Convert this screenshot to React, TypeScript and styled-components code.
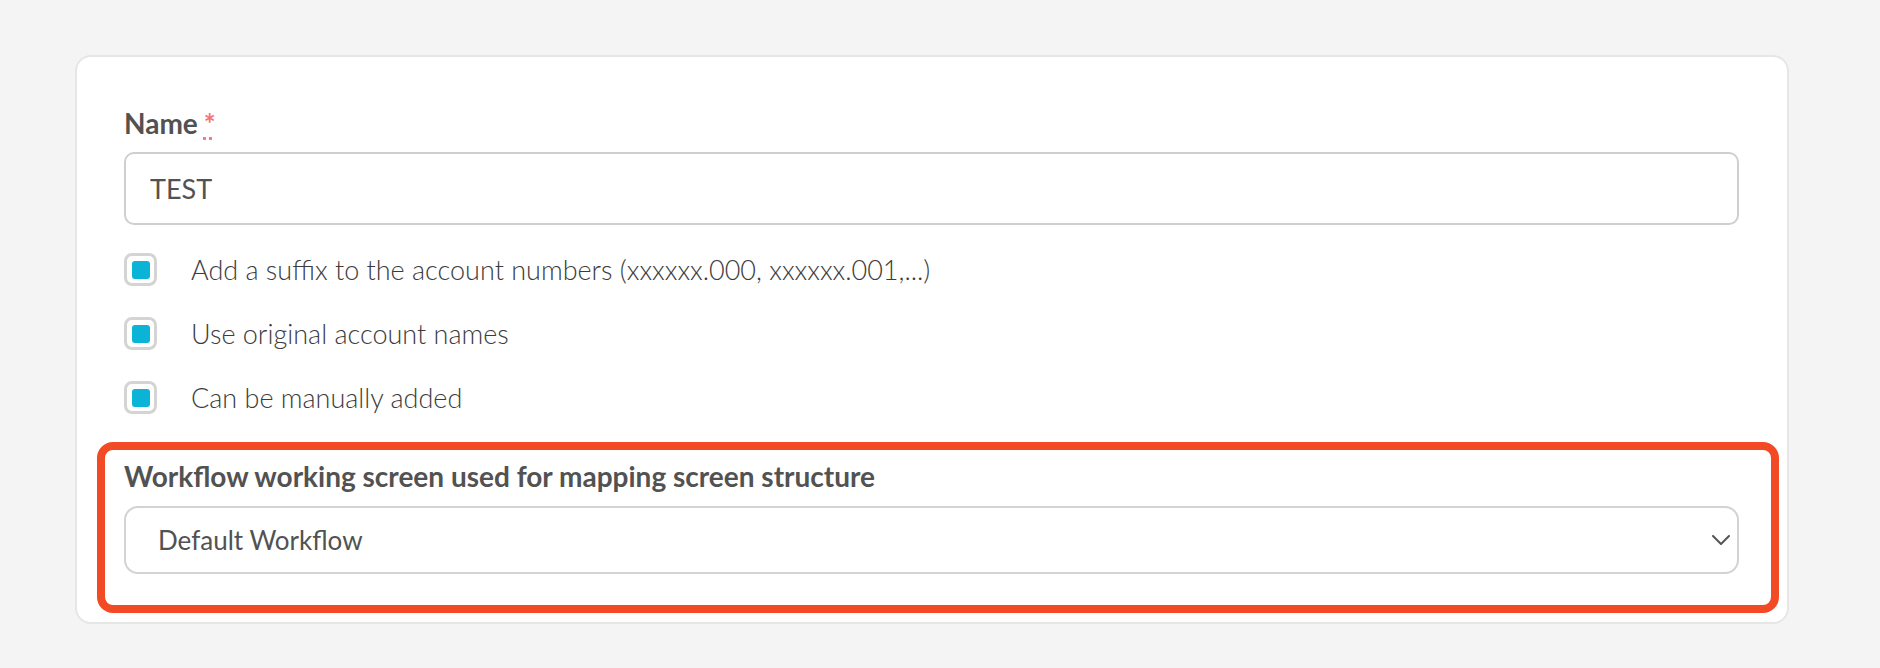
import styled, { createGlobalStyle } from "styled-components";

const GlobalStyle = createGlobalStyle`
    html, body {
        margin: 0;
        padding: 0;
        background-color: #f4f4f4;
        font-family: Lato, "Open Sans", sans-serif;
        color: #525252;
    }
`;

const Page = styled.div`
    padding: 55px 91px 43px 75px;
`;

const Card = styled.div`
    background-color: #ffffff;
    border: 2px solid #e6e6e6;
    border-radius: 16px;
    padding: 50px 48px 9px 47px;
`;

const Label = styled.label`
    display: block;
    font-size: 28px;
    line-height: 1.2;
    font-weight: 700;
    color: #525252;
`;

const Required = styled.abbr`
    margin-left: 6px;
    color: #f47676;
    text-decoration: underline dotted;
    text-underline-offset: 3px;
    cursor: help;
`;

const TextInput = styled.input`
    display: block;
    box-sizing: border-box;
    width: 100%;
    height: 73px;
    margin-top: 11px;
    padding: 0 24px;
    border: 2px solid #cfcfcf;
    border-radius: 10px;
    font-family: inherit;
    font-size: 27px;
    font-weight: 400;
    color: #525252;
    outline: none;
`;

const CheckList = styled.div`
    display: flex;
    flex-direction: column;
    margin-top: 13px;
`;

const CheckRow = styled.label`
    display: flex;
    align-items: center;
    gap: 34px;
    height: 64px;
    font-size: 27px;
    font-weight: 300;
    color: #3c3c3c;
`;

const CheckBox = styled.span<{ $checked: boolean }>`
    box-sizing: border-box;
    flex: none;
    width: 33px;
    height: 33px;
    border: 3px solid #d4d4d4;
    border-radius: 8px;
    display: flex;
    align-items: center;
    justify-content: center;

    &::after {
        content: "";
        width: 18px;
        height: 18px;
        border-radius: 3px;
        background-color: ${(p) => (p.$checked ? "#0bb4d6" : "transparent")};
    }
`;

const Highlight = styled.section`
    margin: 12px -40px 0 -27px;
    padding: 10px 32px 31px 19px;
    border: 8px solid #f34a26;
    border-radius: 16px;
`;

const SelectBox = styled.div`
    box-sizing: border-box;
    display: flex;
    align-items: center;
    justify-content: space-between;
    height: 68px;
    margin-top: 13px;
    padding: 0 7px 0 32px;
    border: 2px solid #d3d3d3;
    border-radius: 14px;
    font-size: 26px;
    font-weight: 400;
    color: #525252;
`;

const options = [
    { id: "suffix", label: "Add a suffix to the account numbers (xxxxxx.000, xxxxxx.001,...)", checked: true },
    { id: "names", label: "Use original account names", checked: true },
    { id: "manual", label: "Can be manually added", checked: true },
];

function Chevron() {
    return (
        <svg width="18" height="10" viewBox="0 0 18 10" fill="none">
            <path d="M1 1l8 8 8-8" stroke="#555" strokeWidth="2" strokeLinecap="round" strokeLinejoin="round" />
        </svg>
    );
}

export default function App() {
    return (
        <Page>
            <GlobalStyle />
            <Card>
                <Label htmlFor="name">
                    Name<Required title="required">*</Required>
                </Label>
                <TextInput id="name" value="TEST" readOnly />

                <CheckList>
                    {options.map((o) => (
                        <CheckRow key={o.id}>
                            <CheckBox $checked={o.checked} />
                            {o.label}
                        </CheckRow>
                    ))}
                </CheckList>

                <Highlight>
                    <Label>Workflow working screen used for mapping screen structure</Label>
                    <SelectBox>
                        <span>Default Workflow</span>
                        <Chevron />
                    </SelectBox>
                </Highlight>
            </Card>
        </Page>
    );
}
